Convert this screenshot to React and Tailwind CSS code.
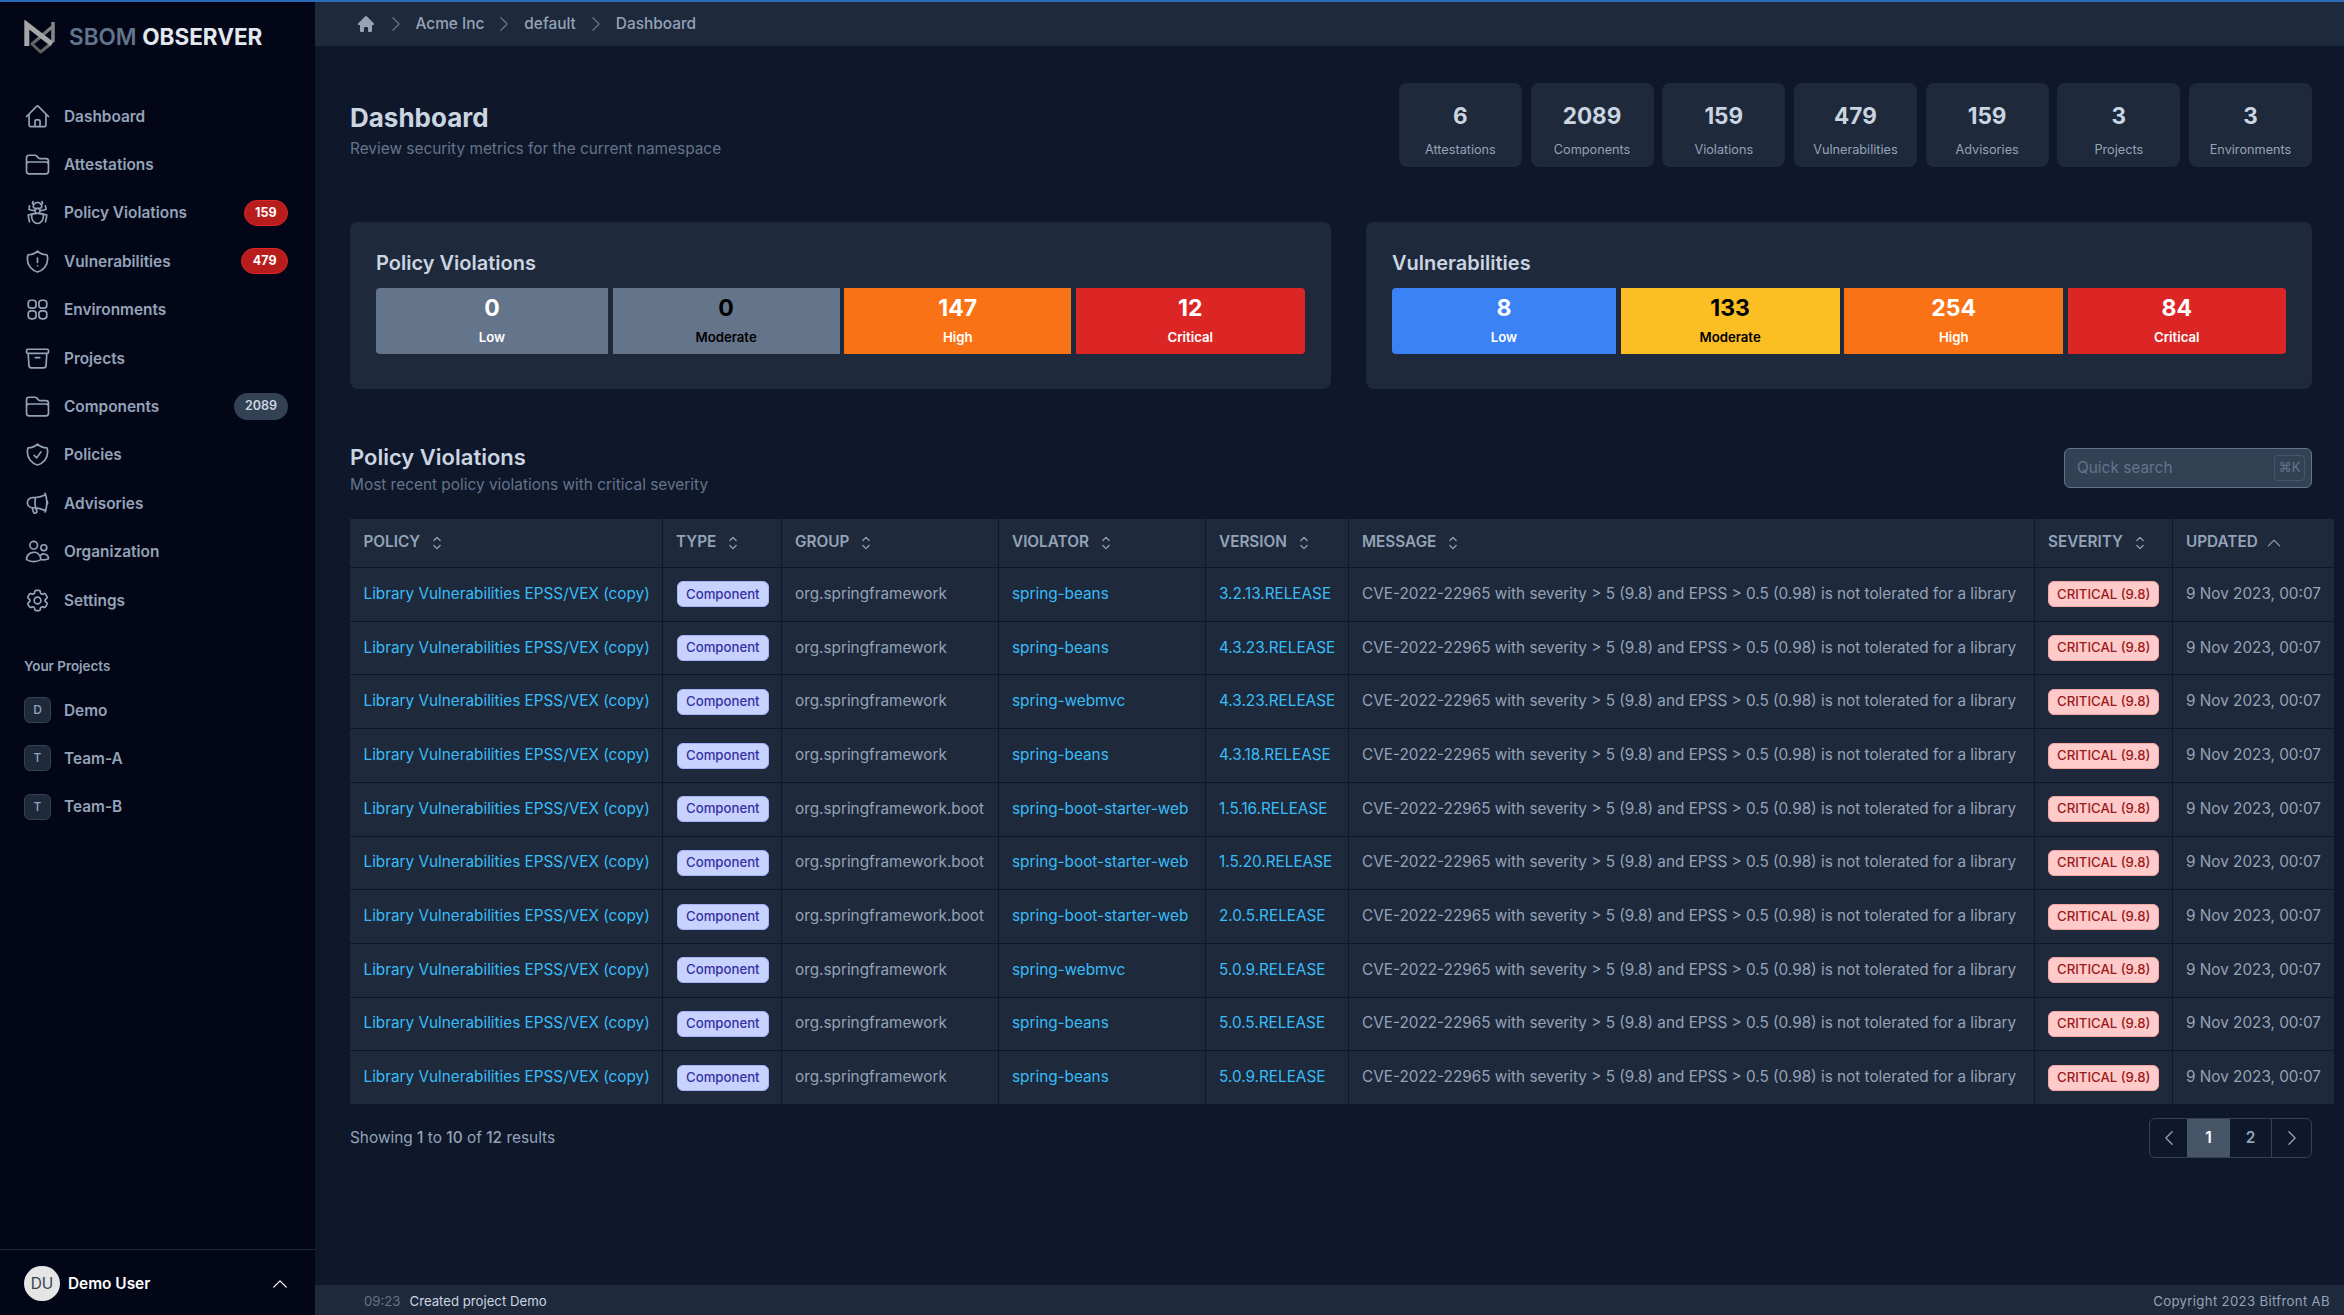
import {
  HiOutlineHome,
  HiOutlineFolder,
  HiOutlineBugAnt,
  HiOutlineShieldExclamation,
  HiOutlineArchiveBox,
  HiOutlineShieldCheck,
  HiOutlineMegaphone,
  HiOutlineUsers,
  HiOutlineCog6Tooth,
  HiOutlineChevronUpDown,
  HiOutlineChevronUp,
  HiOutlineChevronRight,
  HiOutlineChevronLeft,
  HiMiniHome,
} from 'react-icons/hi2'

function EnvironmentsIcon({ className }) {
  return (
    <svg viewBox="0 0 24 24" fill="none" stroke="currentColor" strokeWidth="1.5" className={className}>
      <rect x="3.75" y="3.75" width="7" height="7" rx="2.6" />
      <rect x="13.25" y="3.75" width="7" height="7" rx="2.6" />
      <rect x="3.75" y="13.25" width="7" height="7" rx="2.6" />
      <rect x="13.25" y="13.25" width="7" height="7" rx="2.6" />
    </svg>
  )
}

const navItems = [
  { label: 'Dashboard', icon: HiOutlineHome },
  { label: 'Attestations', icon: HiOutlineFolder },
  { label: 'Policy Violations', icon: HiOutlineBugAnt, badge: '159', danger: true },
  { label: 'Vulnerabilities', icon: HiOutlineShieldExclamation, badge: '479', danger: true },
  { label: 'Environments', icon: EnvironmentsIcon },
  { label: 'Projects', icon: HiOutlineArchiveBox },
  { label: 'Components', icon: HiOutlineFolder, badge: '2089' },
  { label: 'Policies', icon: HiOutlineShieldCheck },
  { label: 'Advisories', icon: HiOutlineMegaphone },
  { label: 'Organization', icon: HiOutlineUsers },
  { label: 'Settings', icon: HiOutlineCog6Tooth },
]

const stats = [
  ['6', 'Attestations'],
  ['2089', 'Components'],
  ['159', 'Violations'],
  ['479', 'Vulnerabilities'],
  ['159', 'Advisories'],
  ['3', 'Projects'],
  ['3', 'Environments'],
]

const base = 'org.springframework'
const boot = 'org.springframework.boot'
const rows = [
  [base, 'spring-beans', '3.2.13.RELEASE'],
  [base, 'spring-beans', '4.3.23.RELEASE'],
  [base, 'spring-webmvc', '4.3.23.RELEASE'],
  [base, 'spring-beans', '4.3.18.RELEASE'],
  [boot, 'spring-boot-starter-web', '1.5.16.RELEASE'],
  [boot, 'spring-boot-starter-web', '1.5.20.RELEASE'],
  [boot, 'spring-boot-starter-web', '2.0.5.RELEASE'],
  [base, 'spring-webmvc', '5.0.9.RELEASE'],
  [base, 'spring-beans', '5.0.5.RELEASE'],
  [base, 'spring-beans', '5.0.9.RELEASE'],
]

const columns = [
  ['POLICY', 'w-[312px]'],
  ['TYPE', 'w-[119px]'],
  ['GROUP', 'w-[217px]'],
  ['VIOLATOR', 'w-[207px]'],
  ['VERSION', 'w-[143px]'],
  ['MESSAGE', 'w-[686px]'],
  ['SEVERITY', 'w-[138px]'],
  ['UPDATED', 'w-[162px]'],
]

function Logo() {
  return (
    <svg width="32" height="34" viewBox="0 0 32 34" fill="none" className="shrink-0">
      <defs>
        <linearGradient id="logoRight" x1="29" y1="2" x2="10" y2="30" gradientUnits="userSpaceOnUse">
          <stop offset="0" stopColor="#8f8f8f" />
          <stop offset="1" stopColor="#5c5c5c" />
        </linearGradient>
      </defs>
      <path d="M29 2 V22" stroke="#858585" strokeWidth="3.6" />
      <path d="M28 7 L8 24 L16.5 32 L27 23.5" stroke="url(#logoRight)" strokeWidth="3" strokeLinejoin="round" />
      <path d="M2.8 26 V4.5 L28 24" stroke="#a6a6a6" strokeWidth="5" strokeLinejoin="miter" />
    </svg>
  )
}

function Sidebar() {
  return (
    <aside className="w-[315px] shrink-0 flex flex-col bg-[#030617]">
      <div className="flex items-center h-[70px] pl-[24px]">
        <Logo />
        <div className="ml-[13px] text-[22.5px] font-semibold text-[#64748b] whitespace-nowrap">
          SBOM <span className="font-bold text-[#e2e8f0]">OBSERVER</span>
        </div>
      </div>
      <nav className="mt-[20px]">
        {navItems.map((item) => {
          const Icon = item.icon
          return (
            <div key={item.label} className="flex items-center h-[48.4px] pl-[24px] pr-[27px] text-[#94a3b8]">
              <Icon className="w-[27px] h-[27px] shrink-0" />
              <span className="ml-[13px] text-[15.4px] font-semibold">{item.label}</span>
              {item.badge && (
                <span
                  className={
                    item.danger
                      ? 'ml-auto h-[26px] px-[10.5px] flex items-center rounded-full bg-[#b91c1c] border border-[#dc2626] text-white text-[12.5px] font-bold'
                      : 'ml-auto h-[27px] px-[11px] flex items-center rounded-full bg-[#334155] text-[#cbd5e1] text-[12.5px] font-semibold'
                  }
                >
                  {item.badge}
                </span>
              )}
            </div>
          )
        })}
      </nav>
      <div className="mt-[32px] pl-[24px] text-[13.4px] font-semibold text-[#94a3b8]">Your Projects</div>
      <div className="mt-[9.5px]">
        {['Demo', 'Team-A', 'Team-B'].map((name) => (
          <div key={name} className="flex items-center h-[48.4px] pl-[24px] text-[#94a3b8]">
            <span className="w-[27px] h-[26px] flex items-center justify-center rounded-md bg-[#1e293b] border border-[#334155] text-[12px] font-medium">
              {name[0]}
            </span>
            <span className="ml-[13px] text-[15.4px] font-semibold">{name}</span>
          </div>
        ))}
      </div>
      <div className="mt-auto h-[66px] border-t border-[#1e293b] flex items-center pl-[24px] pr-[27px] pt-[2px]">
        <span className="w-[36px] h-[35px] rounded-full bg-[#e5e5e5] text-[#374151] text-[15.4px] flex items-center justify-center">DU</span>
        <span className="ml-[8px] text-[15.4px] font-semibold text-white">Demo User</span>
        <HiOutlineChevronUp className="ml-auto -mr-[2px] w-[20px] h-[20px] text-white" />
      </div>
    </aside>
  )
}

function Breadcrumb() {
  return (
    <div className="h-[44px] shrink-0 bg-[#1e293b] flex items-center pl-[40.5px] text-[15.4px] font-medium text-[#94a3b8]">
      <HiMiniHome className="w-[20px] h-[20px]" />
      {['Acme Inc', 'default', 'Dashboard'].map((part) => (
        <div key={part} className="flex items-center">
          <HiOutlineChevronRight className="w-[20px] h-[20px] mx-[10px] text-[#64748b]" />
          <span>{part}</span>
        </div>
      ))}
    </div>
  )
}

function StatCard({ value, label }) {
  return (
    <div className="w-[123px] h-[84px] rounded-lg bg-[#1e293b] flex flex-col items-center">
      <div className="mt-[20px] h-[26px] leading-[26px] text-[22.5px] font-bold text-[#cbd5e1]">{value}</div>
      <div className="mt-[11px] text-[12.7px] text-[#94a3b8]">{label}</div>
    </div>
  )
}

function SeverityBar({ value, label, bg, text, width, extra }) {
  return (
    <div className={`${width} ${bg} ${text} ${extra} h-[66px] flex flex-col items-center`}>
      <div className="mt-[6.5px] h-[26px] leading-[26px] text-[23px] font-bold">{value}</div>
      <div className="mt-[7px] text-[13.2px] font-semibold">{label}</div>
    </div>
  )
}

function SeverityPanel({ title, className, children }) {
  return (
    <div className={`${className} h-[167px] rounded-lg bg-[#1e293b] px-[26px]`}>
      <div className="pt-[27px] h-[66px] text-xl font-semibold text-[#cbd5e1]">{title}</div>
      <div className="flex gap-[4.6px]">{children}</div>
    </div>
  )
}

function Table() {
  return (
    <table className="w-[1984px] table-fixed border-collapse text-[15.3px] text-[#94a3b8]">
      <colgroup>
        {columns.map(([name, w]) => (
          <col key={name} className={w} />
        ))}
      </colgroup>
      <thead>
        <tr className="h-[49px] bg-[#1e293b]">
          {columns.map(([name]) => (
            <th key={name} className="px-[13.5px] text-left font-semibold border-x border-b border-[#0f172a] first:border-l-0 last:border-r-0">
              <span className="flex items-center gap-[7px] whitespace-nowrap">
                {name}
                {name === 'UPDATED' ? (
                  <HiOutlineChevronUp className="w-[18px] h-[18px]" />
                ) : (
                  <HiOutlineChevronUpDown className="w-[20px] h-[20px]" />
                )}
              </span>
            </th>
          ))}
        </tr>
      </thead>
      <tbody>
        {rows.map(([group, violator, version], i) => (
          <tr key={i} className="h-[53.7px] bg-[#1e293b] whitespace-nowrap">
            <td className="px-[13.5px] border-r border-t border-[#0f172a] text-[#38bdf8]">Library Vulnerabilities EPSS/VEX (copy)</td>
            <td className="px-[13.5px] border-x border-t border-[#0f172a]">
              <span className="inline-flex align-middle items-center h-[26px] ml-[1px] px-[8px] rounded-md bg-[#c7d2fe] border border-[#a5b4fc] text-[#3730a3] text-[13.2px] font-medium">Component</span>
            </td>
            <td className="px-[13.5px] border-x border-t border-[#0f172a]">{group}</td>
            <td className="px-[13.5px] border-x border-t border-[#0f172a] text-[#38bdf8]">{violator}</td>
            <td className="px-[13.5px] border-x border-t border-[#0f172a] text-[#38bdf8]">{version}</td>
            <td className="px-[13.5px] border-x border-t border-[#0f172a]">CVE-2022-22965 with severity &gt; 5 (9.8) and EPSS &gt; 0.5 (0.98) is not tolerated for a library</td>
            <td className="px-[13.5px] border-x border-t border-[#0f172a]">
              <span className="inline-flex align-middle items-center h-[26px] px-[8px] rounded-md bg-[#fecaca] border border-[#fca5a5] text-[#991b1b] text-[13.2px] font-medium">CRITICAL (9.8)</span>
            </td>
            <td className="px-[13.5px] border-l border-t border-[#0f172a]">9 Nov 2023, 00:07</td>
          </tr>
        ))}
      </tbody>
    </table>
  )
}

function Pagination() {
  return (
    <div className="flex h-[40px] rounded-md border border-[#334155] overflow-hidden text-[15.4px] font-semibold text-[#94a3b8]">
      <div className="w-[37px] flex items-center justify-center">
        <HiOutlineChevronLeft className="w-[20px] h-[20px]" />
      </div>
      <div className="w-[43px] flex items-center justify-center bg-[#475569] text-white">1</div>
      <div className="w-[42px] flex items-center justify-center border-r border-[#334155]">2</div>
      <div className="w-[39px] flex items-center justify-center">
        <HiOutlineChevronRight className="w-[20px] h-[20px]" />
      </div>
    </div>
  )
}

export default function App() {
  return (
    <div className="h-screen flex flex-col overflow-hidden bg-[#0f172a] font-['Inter',sans-serif]">
      <div className="h-[2px] shrink-0 bg-[#2a68b8]" />
      <div className="flex-1 min-h-0 flex">
        <Sidebar />
        <div className="flex-1 min-w-0 flex flex-col">
          <Breadcrumb />
          <main className="flex-1 min-h-0 pl-[35px] pr-[32px] pt-[37px] overflow-hidden">
            <div className="flex justify-between">
              <div className="mt-[18px]">
                <h1 className="text-[26px] leading-[34px] font-bold text-[#cbd5e1]">Dashboard</h1>
                <p className="mt-[2px] text-[15.4px] text-[#64748b]">Review security metrics for the current namespace</p>
              </div>
              <div className="flex gap-[8.7px]">
                {stats.map(([value, label]) => (
                  <StatCard key={label} value={value} label={label} />
                ))}
              </div>
            </div>

            <div className="mt-[55px] flex justify-between">
              <SeverityPanel title="Policy Violations" className="w-[981px]">
                <SeverityBar value="0" label="Low" bg="bg-[#64748b]" text="text-white" width="w-[232px]" extra="rounded-l" />
                <SeverityBar value="0" label="Moderate" bg="bg-[#64748b]" text="text-black" width="w-[227px]" extra="" />
                <SeverityBar value="147" label="High" bg="bg-[#f97316]" text="text-white" width="w-[227px]" extra="" />
                <SeverityBar value="12" label="Critical" bg="bg-[#dc2626]" text="text-white" width="w-[229px]" extra="rounded-r" />
              </SeverityPanel>
              <SeverityPanel title="Vulnerabilities" className="w-[946px]">
                <SeverityBar value="8" label="Low" bg="bg-[#3b82f6]" text="text-white" width="w-[224px]" extra="rounded-l" />
                <SeverityBar value="133" label="Moderate" bg="bg-[#fbbf24]" text="text-black" width="w-[219px]" extra="" />
                <SeverityBar value="254" label="High" bg="bg-[#f97316]" text="text-white" width="w-[219px]" extra="" />
                <SeverityBar value="84" label="Critical" bg="bg-[#dc2626]" text="text-white" width="w-[218px]" extra="rounded-r" />
              </SeverityPanel>
            </div>

            <div className="mt-[54px] flex items-center justify-between">
              <div>
                <h2 className="text-[22px] leading-[28px] font-semibold text-[#cbd5e1]">Policy Violations</h2>
                <p className="mt-[2px] text-[15.4px] text-[#64748b]">Most recent policy violations with critical severity</p>
              </div>
              <div className="w-[248px] h-[40px] -mt-[3px] rounded-md bg-[#334155] border border-[#64748b] flex items-center pl-[12px] pr-[6px]">
                <span className="text-[15.4px] text-[#64748b]">Quick search</span>
                <span className="ml-auto w-[31px] h-[26px] rounded border border-[#475569] flex items-center justify-center text-[13.2px] text-[#64748b]">⌘K</span>
              </div>
            </div>

            <div className="mt-[22.5px]">
              <Table />
            </div>

            <div className="mt-[13.5px] flex items-center justify-between text-[15.4px] text-[#94a3b8]">
              <p>
                Showing <span className="font-medium">1</span> to <span className="font-medium">10</span> of <span className="font-medium">12</span> results
              </p>
              <Pagination />
            </div>
          </main>
          <div className="h-[30px] shrink-0 bg-[#1e293b] flex items-center pl-[49px] pr-[14px] pt-[3px] text-[13.2px]">
            <span className="text-[#64748b]">09:23</span>
            <span className="ml-[9px] text-[#cbd5e1]">Created project Demo</span>
            <span className="ml-auto tracking-wide text-[#94a3b8]">Copyright 2023 Bitfront AB</span>
          </div>
        </div>
      </div>
    </div>
  )
}
